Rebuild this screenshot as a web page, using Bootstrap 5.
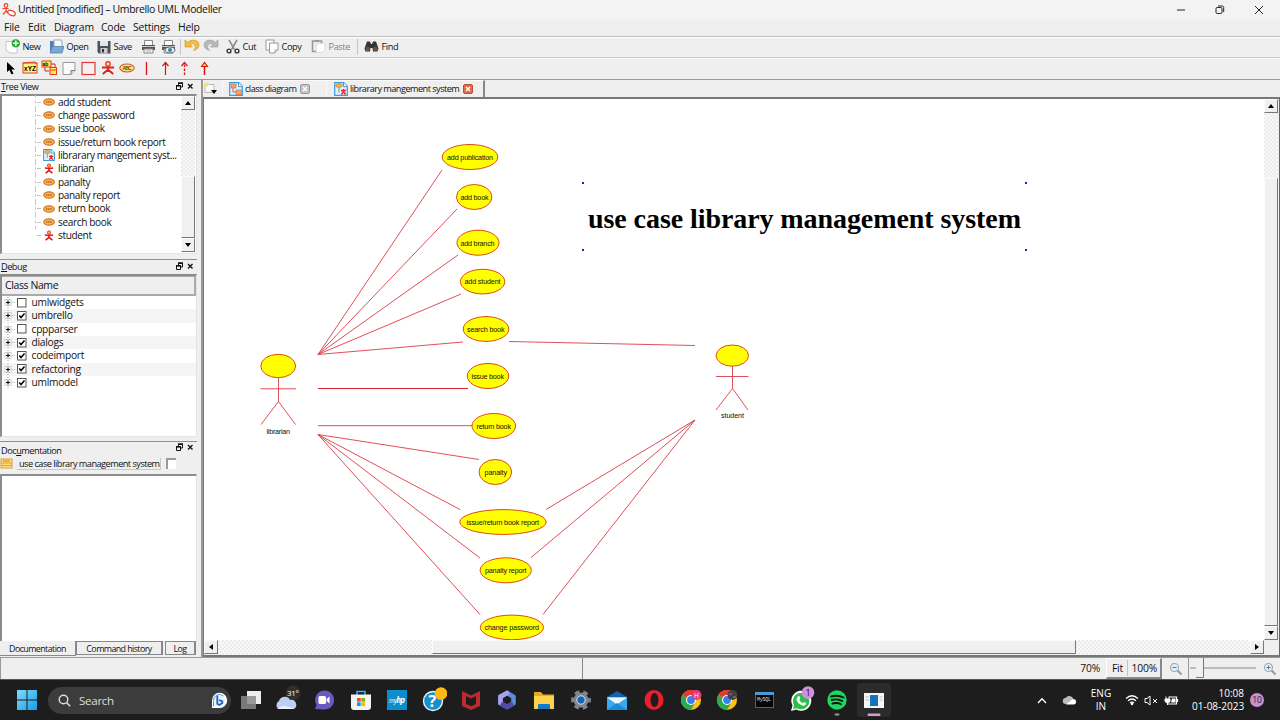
<!DOCTYPE html>
<html lang="en">
<head>
<meta charset="utf-8">
<title>Umbrello UML Modeller</title>
<link href="https://cdn.jsdelivr.net/npm/bootstrap@5.3.0/dist/css/bootstrap.min.css" rel="stylesheet">
<style>
html,body{height:720px;width:1280px;overflow:hidden}
body{font-family:"Open Sans","Noto Sans",sans-serif;font-size:10.2px;line-height:13px;color:#111;background:#efefef;white-space:nowrap}
svg{display:block;flex:none}
.titlebar{height:20px;background:#f3f3f3;font-size:10.5px;padding:0 2px}
.titlebar .caption{letter-spacing:-.39px;margin-left:2px}
.wbtn{width:39px;display:flex;justify-content:center}
.menus{height:16px;padding:1.5px 0 0 4px;font-size:10.4px;letter-spacing:-.2px;display:grid;grid-template-columns:24px 26px 47px 32px 45px 30px}
.tools-main{height:22px;border-top:1px solid #c0c0c0;border-bottom:1px solid #c8c8c8;box-shadow:inset 0 1px #fff;display:grid;align-items:center;padding-left:5px;font-size:9.2px;letter-spacing:-.38px;grid-template-columns:44px 48px 44px 20px 19px 4px 19px 23px 39px 46px 46px 7px 40px}
.tool{display:flex;align-items:center}
.tool svg{margin-right:2.5px}
.vsep{width:1px;height:16px;background:#c4c4c4}
.tools-uml{height:21px;padding-left:1.5px;box-shadow:inset 0 1px #fafafa}
.tools-uml>div{width:19.3px;display:flex;justify-content:center}
.workarea{height:579px;border-top:1px solid #999}
.docks{width:197px}
.dock-title{height:14px;font-size:9.2px;padding:0 2px 0 1px;letter-spacing:-.48px}
.dock-title.tall{height:16px;padding-top:1px}
.dock-title u{text-underline-offset:1px}
.sunken{background:#fff;border:1px solid #e4e4e4;border-top:2px solid #8c8c8c;border-left:2px solid #8c8c8c}
.tree{height:160px}
.tree-rows{width:179px;padding-left:33px;margin-top:-.5px}
.tree-row{height:13.33px;display:flex;align-items:center;border-left:1px dashed #c8c8c8;font-size:10.1px;letter-spacing:-.37px}
.tree-row::before{content:"";flex:none;width:4px;border-top:1px dashed #c0c0c0;margin:0 2px 0 1px}
.tree-row svg{margin-right:3px}
.tree-row.end{border-color:transparent}
.check-track{background-color:#f6f6f6;background-image:conic-gradient(#ebebeb 25%,#fafafa 0 50%,#ebebeb 0 75%,#fafafa 0);background-size:4px 4px}
.sbtn,.thumb{background:#f0f0f0;border:1px solid #fcfcfc;border-right-color:#777;border-bottom-color:#777;flex:none}
.sbtn{width:14px;height:14px;display:flex;align-items:center;justify-content:center}
.edge{height:1px;background:#909090}
.classes{height:163px}
.class-head{height:20px;border:1px solid #aaa;border-width:1px 2px 2px 0;background:#efefef;padding:2px 0 0 3px;font-size:10.5px;letter-spacing:-.4px}
.class-row{height:13.33px;display:flex;align-items:center;padding-left:2px;font-size:10.2px;letter-spacing:-.25px}
.class-row svg+svg{margin:0 4.5px 0 -7px}
.doc-row{height:16px;font-size:9.2px}
.doc-name{border:1px solid #c9c9c9;border-width:0 1px 1px 0;height:12px;line-height:11px;width:144px;padding-left:2px;letter-spacing:-.53px}
.doc-check{width:10px;height:11px;background:#fff;border-top:2px solid #999;border-left:2px solid #999;margin-left:5px}
.doc-box{height:167px;border-bottom:0}
.dtab{height:14px;border:1px solid #888;border-width:1px 2px 1px 1px;text-align:center;font-size:8.9px;letter-spacing:-.58px;line-height:13px}
.dtab.on{border-width:0 1px 1px 0;height:15px;line-height:16px}
.pane{border-left:2px solid #999;margin-left:4px}
.tabs{height:17px;font-size:9.2px;letter-spacing:-.54px}
.doc-tab{height:17px;border-left:1px solid #f9f9f9;border-top:1px solid #fafafa;display:flex;align-items:center}
.view{border-top:2px solid #777;border-left:1px solid #777;border-right:1px solid #666;border-bottom:2px solid #777;height:560px;background:#efefef}
.statusbar{height:22px;border-top:1px solid #999;font-size:10.3px;letter-spacing:-.2px}
.statusbar .blank{width:583px;border-left:1px solid #999;border-right:1px solid #888}
.zoom-set{border:1px solid #fff;border-right:2px solid #888;border-bottom:2px solid #888;width:56px;height:21px;margin-left:6px}
.taskbar{height:41px;background:#1d1d1d;color:#fff;border-top:1px solid #555}
.search-pill{width:183px;height:27px;border-radius:14px;background:#3c3c3c;color:#ddd;font-size:11.600px;letter-spacing:-.3px;margin-left:11px;padding:0 3px 0 10px}
.app{width:36.67px;height:40px;display:flex;align-items:center;justify-content:center}
.tray{font-size:10px;line-height:13.3px}
.count-dot{width:14px;height:14px;border-radius:50%;background:#c98fd6;color:#222;font-size:8.5px;line-height:14px;text-align:center}
</style>
<script src="https://cdn.jsdelivr.net/npm/bootstrap@5.3.0/dist/js/bootstrap.bundle.min.js"></script>
</head>
<body class="d-flex flex-column">
<svg width="0" height="0" class="position-absolute">
<defs>
<symbol id="uc" viewBox="0 0 12 10"><ellipse cx="6" cy="5" rx="5.3" ry="3.2" fill="#f7b25a" stroke="#d9762b" stroke-width="1.2"/><path d="M3 5h6" stroke="#a86a10" stroke-width="1.4" stroke-dasharray="1.5 .6"/></symbol>
<symbol id="actor" viewBox="0 0 12 12"><circle cx="6" cy="2.8" r="1.8" fill="#ffb26b" stroke="#e22" stroke-width="1"/><path d="M1.5 5.5L6 6l4.500-.5M6 5v3M6 8l-3.700 3M6 8l3.700 3" stroke="#e01818" stroke-width="1.8" fill="none"/></symbol>
<symbol id="diagcls" viewBox="0 0 14 14"><path d="M.7.7h9l3.600 3.600v9H.7z" fill="#dff1ff" stroke="#3c9be0" stroke-width="1.2"/><path d="M9.500.7v4h4" fill="#fff" stroke="#3c9be0"/><rect x="2" y="2" width="5" height="4" fill="#f4a56c" stroke="#c9663a" stroke-width=".6"/><rect x="7" y="8" width="5.500" height="4.500" fill="#f4a56c" stroke="#c9663a" stroke-width=".6"/><path d="M4 6v4h3" fill="none" stroke="#c9663a"/></symbol>
<symbol id="diaguc" viewBox="0 0 14 14"><path d="M.7.7h9l3.600 3.600v9H.7z" fill="#dff1ff" stroke="#3c9be0" stroke-width="1.2"/><path d="M9.500.7v4h4" fill="#fff" stroke="#3c9be0"/><ellipse cx="5" cy="3.500" rx="3.300" ry="1.900" fill="#f2b34c" stroke="#a87820" stroke-width=".6"/><path d="M5 5.500v5" stroke="#888"/><path d="M7 8.500l5 0M9.500 7v3M7.500 12.500l2-3 2 3" stroke="#e22" stroke-width="1.400" fill="none"/></symbol>
<symbol id="dockbtns" viewBox="0 0 20 10"><path d="M3.500 3V1.500h4v3.500H6M1.500 4h4v3.500h-4z" fill="none" stroke="#111" stroke-width="1"/><path d="M3 1h5M1 3.600h5" stroke="#111" stroke-width="1.300"/><path d="M13 2l4.500 4.500M17.500 2L13 6.500" stroke="#111" stroke-width="1.300"/></symbol>
<symbol id="expander" viewBox="0 0 20 11"><path d="M5.500 0v11" stroke="#aaa" stroke-dasharray="1 1"/><rect x="2.500" y="2.500" width="6" height="6" fill="#fff" stroke="#bbb" stroke-width=".7"/><path d="M3.500 5.500h4M5.500 3.500v4" stroke="#111" stroke-width="1.200"/><path d="M9 5.500h3" stroke="#aaa" stroke-dasharray="1 1"/></symbol>
<symbol id="printer" viewBox="0 0 15 15"><path d="M3.500 6V1.500h8V6" fill="#fafafa" stroke="#888"/><path d="M1 6h13v5H1z" fill="#555"/><path d="M1 7.500h13" stroke="#ccc"/><path d="M3 10h9v4H3z" fill="#f7f7f7" stroke="#888"/><path d="M5 12h5" stroke="#aaa"/></symbol>
<symbol id="chrome" viewBox="0 0 22 22"><circle cx="11" cy="11" r="10" fill="#fbc116"/><path d="M11 11L2.340 6A10 10 0 0 1 19.660 6z" fill="#e33b2e"/><path d="M11 11L2.340 6A10 10 0 0 0 11 21l4.300-7.500z" fill="#2da94f"/><path d="M2.340 6A10 10 0 0 1 19.660 6H11z" fill="#e33b2e"/><circle cx="11" cy="11" r="5" fill="#fff"/><circle cx="11" cy="11" r="3.900" fill="#3b7ded"/></symbol>
<symbol id="lens" viewBox="0 0 14 14"><path d="M8.500 8.500l4 4" stroke="#999" stroke-width="2"/><circle cx="5.500" cy="5.500" r="4" fill="#e2eef8" stroke="#9aa9b8" stroke-width="1.100"/></symbol>
</defs>
</svg>

<header class="titlebar d-flex align-items-center">
<svg width="14" height="14" viewBox="0 0 14 14"><g fill="#fff" stroke="#e8442c" stroke-width="1.200"><circle cx="4" cy="2.500" r="1.800"/><path d="M.5 5.500h6M4 4v4l-3 3.500M4 8l2 2"/><ellipse cx="9.500" cy="10" rx="4" ry="2.300" transform="rotate(25 9.500 10)"/></g></svg>
<span class="caption">Untitled [modified] – Umbrello UML Modeller</span>
<div class="ms-auto d-flex">
<div class="wbtn"><svg width="10" height="10" viewBox="0 0 10 10"><path d="M1 5h8" stroke="#222"/></svg></div>
<div class="wbtn"><svg width="10" height="10" viewBox="0 0 10 10" fill="none" stroke="#222"><rect x="1" y="2.500" width="6" height="6" rx="1.200"/><path d="M3 1h4.200q1.500 0 1.500 1.500V7"/></svg></div>
<div class="wbtn"><svg width="10" height="10" viewBox="0 0 10 10"><path d="M1 1l8 8M9 1l-8 8" stroke="#222"/></svg></div>
</div>
</header>
<nav class="menus"><span>File</span><span>Edit</span><span>Diagram</span><span>Code</span><span>Settings</span><span>Help</span></nav>

<div class="tools-main">
<div class="tool"><svg width="15" height="15" viewBox="0 0 15 15"><path d="M1 2.500h9l2 2V14H5L1 11z" fill="#fff" stroke="#c5c5c5"/><circle cx="10.800" cy="4.300" r="4.100" fill="#2aa53a"/><path d="M10.800 1.500v5.600M8 4.300h5.600" stroke="#e4ffe0" stroke-width="1.500"/></svg>New</div>
<div class="tool"><svg width="15" height="15" viewBox="0 0 15 15"><path d="M1 2h5l1 1v9H1z" fill="#4f81b5"/><path d="M5 1h7l1 2v7H5z" fill="#f6f9fc" stroke="#9ab"/><path d="M1 14l2-6.500h12L13 14z" fill="#7ba8d6" stroke="#4877a8" stroke-width=".7"/></svg>Open</div>
<div class="tool"><svg width="14" height="14" viewBox="0 0 14 14"><path d="M.5 1h13v12.500H2L.5 12z" fill="#4c5057"/><rect x="3" y="1" width="8" height="5" fill="#dce9f5"/><rect x="3.500" y="8" width="7" height="5.500" fill="#c9ccd1"/><rect x="5" y="9" width="2" height="3.500" fill="#333"/></svg>Save</div>
<div class="tool"><svg width="15" height="15"><use href="#printer"/></svg></div>
<div class="tool"><svg width="15" height="15" viewBox="0 0 15 15"><use href="#printer" width="15" height="15"/><ellipse cx="9" cy="11" rx="5" ry="3" fill="#e5f3fa" stroke="#666"/><circle cx="9" cy="11" r="2" fill="#3586a8"/></svg></div>
<div class="vsep"></div>
<div class="tool"><svg width="16" height="15" viewBox="0 0 16 15"><path d="M1 1v7h7.500L6 5.500Q9 3.500 11 6q1.500 2.500-1.500 5.500Q15 10 15 5.500 14 1 9.500 1.200 6 1 3.500 3.300z" fill="#f3bf38" stroke="#c58d1d" stroke-width=".6"/></svg></div>
<div class="tool"><svg width="16" height="15" viewBox="0 0 16 15"><path d="M15 1v7H7.500L10 5.500Q7 3.500 5 6q-1.500 2.500 1.500 5.500Q1 10 1 5.500 2 1 6.500 1.200 10 1 12.500 3.300z" fill="#b8b8b8" stroke="#999" stroke-width=".6"/></svg></div>
<div class="tool"><svg width="14" height="15" viewBox="0 0 14 15"><path d="M3 1l5.500 9.500M11 1L5.500 10.500" stroke="#8a8a8a" stroke-width="1.500"/><g fill="none" stroke="#333" stroke-width="1.400"><circle cx="3" cy="12" r="1.900"/><circle cx="11" cy="12" r="1.900"/></g></svg>Cut</div>
<div class="tool"><svg width="14" height="15" viewBox="0 0 14 15"><g fill="#fdfdfd" stroke="#999"><path d="M1 1h8v10H1z"/><path d="M4.500 4h8.500v7l-3 3H4.500z"/><path d="M10 14v-3h3"/></g></svg>Copy</div>
<div class="tool text-black-50"><svg width="15" height="15" viewBox="0 0 15 15"><path d="M1.500 2h9v10.500h-9z" fill="#eee" stroke="#999" stroke-width="1.600"/><path d="M4 1h4v2H4z" fill="#999"/><path d="M5.500 4.500H14v6l-3 3H5.500z" fill="#fff" stroke="#ddd"/></svg>Paste</div>
<div class="vsep"></div>
<div class="tool"><svg width="15" height="13" viewBox="0 0 15 13"><path d="M3 1.500h3L7 4h1l1-2.500h3l2.500 7-1 3H9L8.500 8h-2L6 11.500H1.500l-1-3z" fill="#353535"/><circle cx="3.500" cy="9" r="2.200" fill="#6b5545"/><circle cx="11.500" cy="9" r="2.200" fill="#6b5545"/></svg>Find</div>
</div>

<div class="tools-uml d-flex align-items-center">
<div><svg width="12" height="14" viewBox="0 0 12 14"><path d="M2 1v10l2.500-2 2 4.500 2-1-2-4h3.500z" fill="#000"/></svg></div>
<div><svg width="16" height="14" viewBox="0 0 16 14"><rect x="1" y="2" width="14" height="10" fill="#fff27a" stroke="#e04020"/><path d="M1 2l12-1 2 2" fill="none" stroke="#e04020"/><text x="2" y="10" font-family="Liberation Sans" font-weight="bold" font-size="6.500" textLength="12">xYZ</text></svg></div>
<div><svg width="17" height="16" viewBox="0 0 17 16"><rect x="1" y="1" width="9" height="6" fill="#ffec55" stroke="#e04020"/><text x="1.500" y="6" font-family="Liberation Sans" font-weight="bold" font-size="5">ab</text><path d="M4 7v4h4M10 4h4v3" fill="none" stroke="#d22"/><rect x="9" y="7.500" width="6.500" height="7" fill="#ffec55" stroke="#e04020"/><path d="M9 10h7" stroke="#e04020"/></svg></div>
<div><svg width="14" height="15" viewBox="0 0 14 15"><path d="M1 1.500h12v8l-4 4H1z" fill="#fafafa" stroke="#999"/><path d="M9 13.500v-4h4" fill="#ddd" stroke="#777"/></svg></div>
<div><svg width="15" height="15" viewBox="0 0 15 15"><rect x="1" y="1.500" width="13" height="12" fill="#f6f0f0" stroke="#e23a3a" stroke-width="1.200"/></svg></div>
<div><svg width="14" height="14" viewBox="0 0 12 12"><circle cx="6" cy="2.500" r="1.900" fill="#ffe36b" stroke="#e22" stroke-width="1"/><path d="M.8 5.500h10.400M6 5v3M6 7.500l-4.500 3.700M6 7.500l4.500 3.700" stroke="#dd2222" stroke-width="1.700" fill="none"/></svg></div>
<div><svg width="16" height="12" viewBox="0 0 16 12"><ellipse cx="8" cy="6" rx="7.200" ry="4" fill="#ffe680" stroke="#d9542b" stroke-width="1.100"/><text x="3.500" y="8" font-family="Liberation Sans" font-weight="bold" font-size="5" textLength="9" fill="#6b4a10">ABC</text></svg></div>
<div><svg width="9" height="15" viewBox="0 0 9 15"><path d="M4.500 1v13" stroke="#d11" stroke-width="1.300"/></svg></div>
<div><svg width="9" height="15" viewBox="0 0 9 15"><path d="M4.500 14V2M1.500 5l3-3.500 3 3.500" fill="none" stroke="#d11" stroke-width="1.200"/></svg></div>
<div><svg width="9" height="15" viewBox="0 0 9 15"><path d="M4.500 14V2" stroke="#d11" stroke-width="1.300" stroke-dasharray="2.500 1.500"/><path d="M1.500 5l3-3.500 3 3.500" fill="none" stroke="#d11" stroke-width="1.200"/></svg></div>
<div><svg width="9" height="15" viewBox="0 0 9 15"><path d="M4.500 14V5" stroke="#d11" stroke-width="1.500"/><path d="M1.500 5.500l3-4 3 4z" fill="#ffd84a" stroke="#d11" stroke-width="1.100"/></svg></div>
</div>

<main class="workarea d-flex">
<aside class="docks d-flex flex-column">
<div class="dock-title d-flex align-items-center justify-content-between"><span><u>T</u>ree View</span><svg width="20" height="10"><use href="#dockbtns"/></svg></div>
<div class="sunken tree d-flex">
<div class="tree-rows">
<div class="tree-row"><svg width="12" height="10"><use href="#uc"/></svg>add student</div>
<div class="tree-row"><svg width="12" height="10"><use href="#uc"/></svg>change password</div>
<div class="tree-row"><svg width="12" height="10"><use href="#uc"/></svg>issue book</div>
<div class="tree-row"><svg width="12" height="10"><use href="#uc"/></svg>issue/return book report</div>
<div class="tree-row"><svg width="12" height="12"><use href="#diaguc"/></svg>librarary mangement syst...</div>
<div class="tree-row"><svg width="12" height="11"><use href="#actor"/></svg>librarian</div>
<div class="tree-row"><svg width="12" height="10"><use href="#uc"/></svg>panalty</div>
<div class="tree-row"><svg width="12" height="10"><use href="#uc"/></svg>panalty report</div>
<div class="tree-row"><svg width="12" height="10"><use href="#uc"/></svg>return book</div>
<div class="tree-row"><svg width="12" height="10"><use href="#uc"/></svg>search book</div>
<div class="tree-row end"><svg width="12" height="11"><use href="#actor"/></svg>student</div>
</div>
<div class="d-flex flex-column check-track">
<div class="sbtn"><svg width="6" height="4" viewBox="0 0 6 4"><path d="M0 4l3-4 3 4z"/></svg></div>
<div class="flex-grow-1"></div>
<div class="thumb" style="height:62px"></div>
<div class="sbtn"><svg width="6" height="4" viewBox="0 0 6 4"><path d="M0 0h6L3 4z"/></svg></div>
<div class="bg-white" style="height:1px"></div>
</div>
</div>
<div style="height:5px"></div><div class="edge"></div>
<div class="dock-title d-flex align-items-center justify-content-between"><span><u>D</u>ebug</span><svg width="20" height="10"><use href="#dockbtns"/></svg></div>
<div class="sunken classes">
<div class="class-head">Class Name</div>
<div id="classRows"></div>
</div>
<div style="height:4px"></div><div class="edge"></div>
<div class="dock-title tall d-flex align-items-center justify-content-between"><span>Doc<u>u</u>mentation</span><svg width="20" height="10" class="mb-1"><use href="#dockbtns"/></svg></div>
<div class="doc-row d-flex">
<svg width="13" height="11" viewBox="0 0 13 11"><rect x="1" y="1" width="11" height="9" fill="#ffdf7e" stroke="#e49a3a"/><path d="M1 5h11M1 7.500h11" stroke="#e49a3a"/><path d="M3 3h7" stroke="#b5541b" stroke-dasharray="1.500 .7"/></svg>
<div class="ms-1 doc-name">use case library management system</div><div class="doc-check"></div>
</div>
<div class="sunken doc-box"></div>
<div class="d-flex"><div class="dtab on" style="width:76px">Documentation</div><div class="dtab" style="width:87px">Command history</div><div class="dtab ms-auto" style="width:31px;margin-right:1px">Log</div></div>
</aside>

<section class="pane flex-grow-1">
<div class="tabs d-flex align-items-center">
<svg width="17" height="14" viewBox="0 0 17 14"><path d="M2 3.500h9v8H2z" fill="#fafafa" stroke="#aaa" stroke-width=".8"/><circle cx="3.500" cy="3.500" r="2.300" fill="#f3e27a"/><path d="M8 9h6l-3 4z"/></svg>
<div class="doc-tab" style="width:104px;margin-left:2px;padding-left:6px"><svg width="14" height="14" style="margin-right:2px"><use href="#diagcls"/></svg><span>class diagram</span><svg class="ms-1" width="10" height="10" viewBox="0 0 10 10"><rect x=".5" y=".5" width="9" height="9" rx="1.500" fill="#c5c5c5" stroke="#999"/><path d="M3 3l4 4M7 3L3 7" stroke="#fff" stroke-width="1.400"/></svg></div>
<div class="doc-tab" style="width:159px;padding-left:7px;border-right:2px solid #888"><svg width="14" height="14" style="margin:0 2px 0 0"><use href="#diaguc"/></svg><span>librarary mangement system</span><svg class="ms-1" width="10" height="10" viewBox="0 0 10 10"><rect x=".5" y=".5" width="9" height="9" rx="1.500" fill="#dc6d50" stroke="#c24a30"/><path d="M3 3l4 4M7 3L3 7" stroke="#fff" stroke-width="1.400"/></svg></div>
</div>
<div class="view">
<div class="d-flex">
<svg width="1060" height="541" viewBox="204 99 1060 541" class="bg-white">
<g stroke="#dc3a44" stroke-width=".9" fill="none">
<path d="M442 170L318 354.500L457 209M318 354.500L458 255M318 354.500L461 294M318 354.500L463 342M509 341.500L695 345.500"/>
<path d="M318 388.500H468" stroke="#d81e28" stroke-width="1.100"/><path d="M318 425.700H472"/>
<path d="M318 434.500L479 459.500M318 434.500L460 509.500M318 434.500L480 558M318 434.500L480 614.500M695 420L546 509.500M695 420L531 557.500M695 420L543 614.500"/>
<path d="M278.500 378V401.500M260.500 388.800H296M261 424.500L278.500 401.500L295.500 424.500M732.500 366V388.500M716 376.500H748.500M716 410L732.500 388.500L748 410"/>
</g>
<g fill="#ff0" stroke="#de4a10" stroke-width="1">
<ellipse cx="278.200" cy="366" rx="17.400" ry="11.700"/><ellipse cx="732.300" cy="355.600" rx="16.200" ry="10.600"/>
<ellipse cx="470" cy="157" rx="27.800" ry="12.500"/><ellipse cx="474.200" cy="197" rx="17.700" ry="12.500"/><ellipse cx="478" cy="242.700" rx="21" ry="12.500"/><ellipse cx="482.600" cy="281.600" rx="22.200" ry="12.300"/><ellipse cx="486" cy="329" rx="22.800" ry="12.400"/><ellipse cx="488" cy="376" rx="20.700" ry="12.500"/><ellipse cx="493.800" cy="426" rx="21.800" ry="12.500"/><ellipse cx="495.300" cy="472" rx="16.300" ry="12.500"/><ellipse cx="503" cy="522" rx="43.200" ry="12.400"/><ellipse cx="505.700" cy="570.300" rx="25.600" ry="12.500"/><ellipse cx="511.900" cy="627.400" rx="31.600" ry="12.300"/>
</g>
<g font-family="Liberation Sans,sans-serif" font-size="7.200" fill="#111">
<text x="447" y="159.500" textLength="46">add publication</text><text x="460.500" y="199.500" textLength="28">add book</text><text x="460.500" y="245.500" textLength="34">add branch</text><text x="464.500" y="284" textLength="36">add student</text><text x="467" y="331.500" textLength="37.500">search book</text><text x="471.500" y="379" textLength="32.500">issue book</text><text x="476.500" y="428.500" textLength="34.500">return book</text><text x="484.500" y="475" textLength="22.500">panalty</text><text x="466.500" y="525" textLength="72.500">issue/return book report</text><text x="485" y="573" textLength="41.500">panalty report</text><text x="484.500" y="630" textLength="54.500">change password</text><text x="266.500" y="433.500" textLength="23.500">librarian</text><text x="721" y="418" textLength="23">student</text>
</g>
<text x="588" y="228" textLength="433" font-family="Liberation Serif,serif" font-weight="bold" font-size="28" fill="#000">use case library management system</text>
<g fill="#22a"><rect x="582" y="182" width="2" height="2"/><rect x="1025" y="182" width="2" height="2"/><rect x="582" y="249" width="2" height="2"/><rect x="1025" y="249" width="2" height="2"/></g>
</svg>
<div class="d-flex flex-column check-track" style="width:14px"><div class="sbtn"><svg width="6" height="4" viewBox="0 0 6 4"><path d="M0 4l3-4 3 4z"/></svg></div><div style="height:65px"></div><div class="thumb flex-grow-1"></div><div class="sbtn"><svg width="6" height="4" viewBox="0 0 6 4"><path d="M0 0h6L3 4z"/></svg></div></div>
</div>
<div class="d-flex check-track" style="width:1060px;height:14px"><div class="sbtn"><svg width="4" height="6" viewBox="0 0 4 6"><path d="M4 0v6L0 3z"/></svg></div><div style="width:214px"></div><div class="thumb" style="width:644px"></div><div class="sbtn ms-auto"><svg width="4" height="6" viewBox="0 0 4 6"><path d="M0 0v6l4-3z"/></svg></div></div>
</div>
</section>
</main>

<footer class="statusbar d-flex">
<div class="blank"></div>
<div class="d-flex align-items-center flex-grow-1">
<span class="ms-auto">70%</span>
<div class="zoom-set d-flex align-items-center justify-content-between" style="padding:0 3px 0 5px"><span>Fit</span><div class="vsep"></div><span>100%</span></div>
<div class="d-flex justify-content-center" style="width:26px;padding-left:2px"><svg width="14" height="14" viewBox="0 0 14 14"><use href="#lens" width="14" height="14"/><path d="M3.500 5.500h4" stroke="#678"/></svg></div>
<svg width="70" height="21" viewBox="0 0 70 21"><path d="M.5 0v21" stroke="#999"/><path d="M2 10h66" stroke="#888"/><rect x="8" y="0" width="7" height="20" fill="#f0f0f0"/><path d="M8 19.500h7.500V0" fill="none" stroke="#777"/></svg>
<div class="d-flex" style="width:22px;padding-left:5px"><svg width="14" height="14" viewBox="0 0 14 14"><use href="#lens" width="14" height="14"/><path d="M3.500 5.500h4M5.500 3.500v4" stroke="#678"/></svg></div>
</div>
</footer>

<div class="taskbar d-flex align-items-center">
<svg width="20" height="20" viewBox="0 0 20 20" style="margin-left:17px"><defs><linearGradient id="wg" x2="1" y2="1"><stop stop-color="#7fdcfb"/><stop offset="1" stop-color="#159be8"/></linearGradient></defs><path d="M0 0h9.500v9.500H0zM10.500 0H20v9.500h-9.500zM0 10.500h9.500V20H0zM10.500 10.500H20V20h-9.500z" fill="url(#wg)"/></svg>
<div class="search-pill d-flex align-items-center"><svg width="13" height="13" viewBox="0 0 13 13" class="me-2"><circle cx="5.500" cy="5.500" r="4.300" fill="none" stroke="#ddd" stroke-width="1.400"/><path d="M8.700 8.700l3.500 3.500" stroke="#ddd" stroke-width="1.600"/></svg><span>Search</span>
<svg class="ms-auto" width="17" height="17" viewBox="0 0 17 17"><path d="M1 16V8.500A7.600 7.600 0 1 1 8.500 16z" fill="#fff"/><path d="M2.500 14.500v-6a6 6 0 1 1 6 6z" fill="#e9f4fd"/><path d="M2.500 14.500v-6a6 6 0 0 1 10-4.500" fill="none" stroke="#3aa3ea" stroke-width="1"/><path d="M6.300 3.800v7.900l2 1.200 3-1.800V9.300L8 8" fill="none" stroke="#1a62c9" stroke-width="1.800"/></svg></div>
<div class="app" style="margin-left:1.500px"><svg width="22" height="20" viewBox="0 0 22 20"><rect x="7" y="1" width="14" height="13" fill="#eee"/><rect x="1" y="6" width="15" height="13" fill="#8a8a8a" opacity=".85"/></svg></div>
<div class="app"><svg width="32" height="30" viewBox="0 0 32 30"><circle cx="22" cy="8" r="7.500" fill="#332f28"/><path d="M7 24a5 5 0 0 1 1-8 6 6 0 0 1 11-1 5 5 0 0 1 4 9z" fill="#bdd0f3"/><path d="M7 24q4-6 16 0z" fill="#e9effc"/><text x="16" y="11" fill="#fff" font-size="8" font-family="Open Sans" textLength="12">31°</text></svg></div>
<div class="app"><svg width="20" height="20" viewBox="0 0 20 20"><path d="M1 19l1.500-4A9.500 9.500 0 1 1 10 19.500z" fill="#6659c0"/><rect x="4.500" y="6" width="7.500" height="8" rx="1.500" fill="#fff"/><path d="M12.500 9l3-2.500v7l-3-2.500z" fill="#fff"/></svg></div>
<div class="app"><svg width="20" height="20" viewBox="0 0 20 20"><path d="M6 5V1.500h8V5" fill="none" stroke="#39b5ef" stroke-width="1.500"/><path d="M0 4.500h20V17q0 3-3 3H3q-3 0-3-3z" fill="#f5f5f5"/><path d="M6 8h3.700v3.700H6z" fill="#f04f23"/><path d="M10.300 8H14v3.700h-3.700z" fill="#7db700"/><path d="M6 12.300h3.700V16H6z" fill="#00a1ea"/><path d="M10.300 12.300H14V16h-3.700z" fill="#fdb800"/></svg></div>
<div class="app"><svg width="20" height="20" viewBox="0 0 20 20"><rect width="20" height="20" fill="#0a8fcc"/><text x="2" y="13" fill="#fff" font-size="8" font-style="italic" font-family="Open Sans" textLength="16"><tspan font-size="6.500">my</tspan><tspan font-weight="bold">hp</tspan></text></svg></div>
<div class="app"><svg width="26" height="26" viewBox="0 0 26 26"><circle cx="12" cy="14" r="9.500" fill="#168fcb" stroke="#e8f4fa" stroke-width="1.400"/><text x="7.500" y="20" fill="#fff" font-weight="bold" font-size="16" font-family="Open Sans">?</text><circle cx="20" cy="6.500" r="6.300" fill="#ffb915"/></svg></div>
<div class="app"><svg width="18" height="20" viewBox="0 0 18 20"><path d="M0 1l9 4.500L18 1v15l-9 4-9-4z" fill="#bd2b2e"/><path d="M4 6l5 2.600L14 6v8l-5 2.300L4 14z" fill="#1d1d1d"/></svg></div>
<div class="app"><svg width="20" height="20" viewBox="0 0 20 20"><path d="M10 3l6.500 3.700v6.600L10 17l-6.500-3.700V6.700z" fill="none" stroke="#5a8fe0" stroke-width="4.600" stroke-linejoin="round"/><path d="M3.500 13V6.700L10 3" fill="none" stroke="#a9a0ec" stroke-width="4.600" stroke-linecap="round"/><path d="M4 13.500l6 3.500 6-3.500" fill="none" stroke="#5547a8" stroke-width="4.200"/></svg></div>
<div class="app"><svg width="20" height="19" viewBox="0 0 20 19"><path d="M0 1h7l2 2.500h11V17H0z" fill="#e9a820"/><path d="M0 5h20v13H0z" fill="#fdd14e"/><path d="M4 18v-4q0-1 1-1h10q1 0 1 1v4z" fill="#1478c6"/></svg></div>
<div class="app"><svg width="20" height="20" viewBox="0 0 20 20"><circle cx="10" cy="10" r="8.300" fill="none" stroke="#81858d" stroke-width="3.200" stroke-dasharray="4.700 4" stroke-dashoffset="2.300"/><circle cx="10" cy="10" r="7.500" fill="#81858d"/><circle cx="10" cy="10" r="4.200" fill="#1665b3" stroke="#dfe6ee"/></svg></div>
<div class="app"><svg width="20" height="19" viewBox="0 0 20 19"><path d="M0 6l10-6 10 6v13H0z" fill="#1163ad"/><path d="M0 6v13h20V6z" fill="#35aceb"/><path d="M0 6.500h20L10 13.500z" fill="#eef6fc"/><path d="M0 19l10-7 10 7z" fill="#1d89d7"/></svg></div>
<div class="app"><svg width="20" height="20" viewBox="0 0 20 20"><ellipse cx="10" cy="10" rx="9.500" ry="10" fill="#e7202b"/><ellipse cx="10.500" cy="10" rx="4" ry="7" fill="#1d1d1d"/></svg></div>
<div class="app"><svg width="22" height="22" viewBox="0 0 22 22"><use href="#chrome" width="22" height="22"/><circle cx="16.500" cy="6" r="5" fill="#e13a7e"/><text x="14" y="8.500" font-size="6.500" fill="#fff" font-family="Open Sans">H</text></svg></div>
<div class="app"><svg width="22" height="22" viewBox="0 0 22 22"><use href="#chrome" width="22" height="22"/><circle cx="16.500" cy="6" r="5" fill="#454047"/><path d="M13 5h3M17 8h3" stroke="#a78"/></svg></div>
<div class="app"><svg width="19" height="16" viewBox="0 0 19 16"><rect x=".5" y=".5" width="18" height="15" fill="#050505" stroke="#4c6484"/><path d="M0 0h19v3H0z" fill="#4a9bd5"/><text x="2" y="9" font-size="5" fill="#ddd" font-family="Liberation Mono" textLength="14">MySQL</text></svg></div>
<div class="app"><svg width="28" height="28" viewBox="0 0 28 28"><path d="M4 25l1.500-5.500a10 10 0 1 1 4 4z" fill="#fff"/><path d="M6 23l1-3.800a8.200 8.200 0 1 1 3 3z" fill="#2fbd4e"/><path d="M10.500 11q1.500-2 2.500.5l.2 1.500-.9 1q1.200 2.300 3.500 3.200l1.200-1.200q2.500.7 2 2-1 2.200-3.500 1.500-4.500-1.500-6-5.500 0-1.500 1-3z" fill="#fff"/><circle cx="21" cy="6.500" r="6.300" fill="#d28fe0"/><text x="18.500" y="10" font-size="9" fill="#111" font-family="Open Sans">1</text></svg></div>
<div class="app"><svg width="20" height="36" viewBox="0 0 20 36"><circle cx="10" cy="18" r="9.700" fill="#1ed760"/><path d="M4 14.500q7-2 12.500 1M4.700 18q6-1.700 10.500 1M5.500 21.500q5-1.300 8.500.8" stroke="#111" stroke-width="1.900" fill="none" stroke-linecap="round"/><rect x="7.500" y="31.500" width="5" height="2" rx="1" fill="#999"/></svg></div>
<div class="app"><svg width="34" height="38" viewBox="0 0 34 38"><rect y="2" width="34" height="34" rx="4" fill="#2b2b2b"/><rect x="7" y="12" width="20" height="15" fill="#f5f5f5"/><rect x="13" y="14" width="8" height="11" fill="#1672bd"/><path d="M8.500 16H12M8.500 19H12M22.500 16H25.500M22.500 19H25.500" stroke="#bbb"/><rect x="10.500" y="32.500" width="13" height="2.500" rx="1.200" fill="#d29bdc"/></svg></div>
<div class="tray d-flex align-items-center ms-auto">
<svg width="10" height="7" viewBox="0 0 10 7" style="margin-right:15px"><path d="M1 6l4-4.200L9 6" fill="none" stroke="#fff" stroke-width="1.300"/></svg>
<svg width="15" height="10" viewBox="0 0 15 10" style="margin-right:13px"><path d="M4 9a3 3 0 0 1-.5-6 4.500 4.500 0 0 1 8 1 2.500 2.500 0 0 1 .5 5z" fill="#bbb"/><path d="M4 9.500L10 4.500a2.500 2.500 0 0 1 2 5z" fill="#fff"/></svg>
<div class="text-center" style="width:22px;margin-right:13px">ENG<br>IN</div>
<svg width="14" height="12" viewBox="0 0 14 12" style="margin-right:5px"><path d="M1 4.500q6-5.500 12 0M3 6.800q4-3.600 8 0M5 9q2-1.900 4 0" fill="none" stroke="#fff" stroke-width="1.200"/><circle cx="7" cy="10" r="1.200" fill="#fff"/></svg>
<svg width="14" height="11" viewBox="0 0 14 11" style="margin-right:6px"><path d="M1 3.500h2L6 1v9L3 7.500H1z" fill="none" stroke="#fff"/><path d="M9 4l4 4M13 4L9 8" stroke="#fff"/></svg>
<svg width="15" height="12" viewBox="0 0 15 12" style="margin-right:13px"><path d="M5 3h7.500v7H3" fill="none" stroke="#fff" stroke-width="1.200"/><path d="M13.500 5v3" stroke="#fff" stroke-width="1.300"/><path d="M8 4.500h3.500v4H7z" fill="#fff"/><path d="M1 5h5v2.500L4 9H3L1 7.500zM2 2.500v2.500M5 2.500v2.500M3.500 9v2" fill="#fff" stroke="#fff"/></svg>
<div class="text-end" style="width:52px;margin-right:6px">10:08<br>01-08-2023</div>
<div class="count-dot" style="margin-right:16px">10</div>
</div>
</div>
<script>
const classes=[["umlwidgets",0],["umbrello",1],["cppparser",0],["dialogs",1],["codeimport",1],["refactoring",1],["umlmodel",1]];
document.getElementById("classRows").innerHTML=classes.map(([name,on],i)=>
`<div class="class-row" style="background:${i%2?"#f5f5f5":"#fff"}"><svg width="20" height="13" viewBox="3 -1 20 13"><use href="#expander" x="1.500" width="20" height="11"/></svg><svg width="10" height="10" viewBox="0 0 10 10"><rect x=".5" y=".5" width="8.500" height="8.500" fill="#fff" stroke="#555"/>${on?'<path d="M2.300 4.500L4 6.500 7.500 2.500" fill="none" stroke="#000" stroke-width="1.500"/>':''}</svg>${name}</div>`).join("");
</script>
</body>
</html>
